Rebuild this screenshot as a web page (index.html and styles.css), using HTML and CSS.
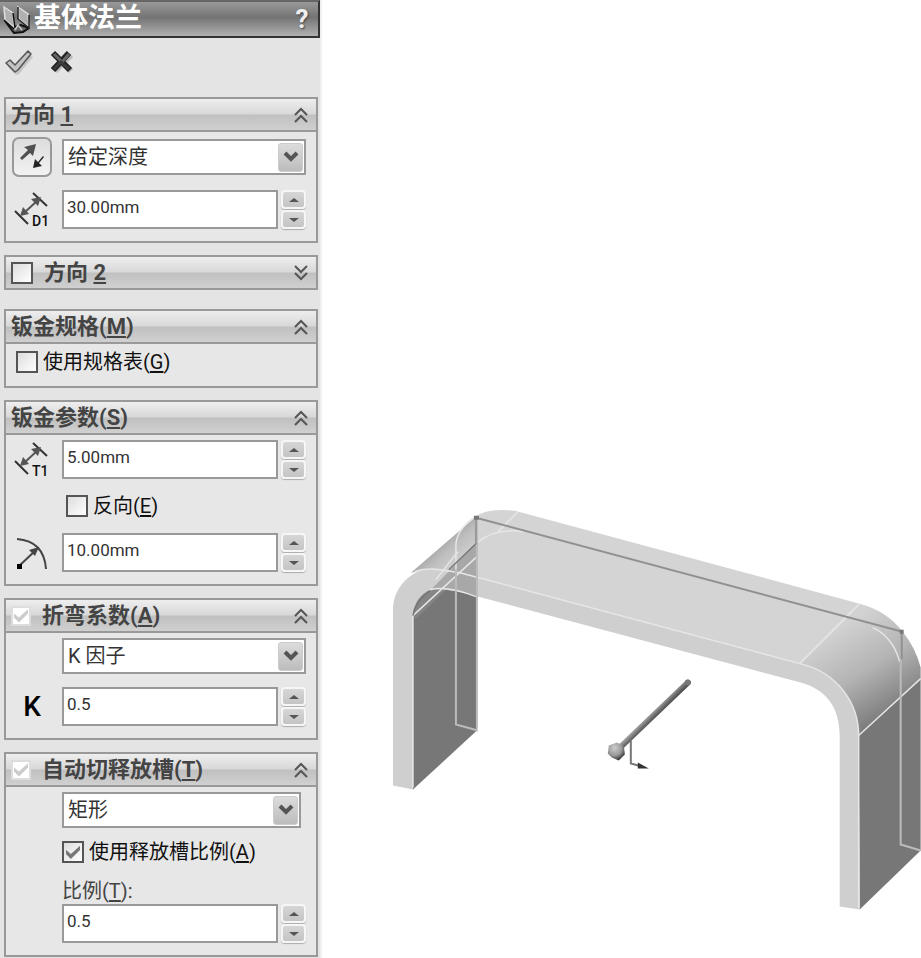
FILE: index.html
```html
<!DOCTYPE html>
<html lang="zh-CN">
<head>
    <meta charset="UTF-8">
    <meta name="viewport" content="width=device-width, initial-scale=1.0">
    <title>基体法兰</title>
    <link rel="stylesheet" href="styles.css">
</head>
<body>
    <form class="sidebar">
        <header class="titlebar">
            <svg width="30" height="32" viewBox="0 0 30 32">
                <path d="M5 18l9 6 7-2 8 3-6 4-9 1z" fill="#666" stroke="#111" stroke-width="2"/>
                <path d="M4 4l9 6 1 14-9-7z" fill="#b0b0b0" stroke="#ddd" stroke-width="1.5"/>
                <path d="M13 10l2 15M4 17l10 9" fill="none" stroke="#111" stroke-width="1.5"/>
                <path d="M18 4l10 7 1 13-10-8z" fill="#b0b0b0" stroke="#ddd" stroke-width="1.5"/>
                <path d="M18 4v12l11 9V12" fill="none" stroke="#222" stroke-width="1.5"/>
                <path d="M15 27l3-5 4 5" fill="none" stroke="#ccc" stroke-width="1.5"/>
            </svg>
            <h1>基体法兰</h1>
            <button type="button" class="help" aria-label="帮助">?</button>
        </header>

        <div class="toolbar">
            <button type="submit" class="tool" aria-label="确定">
                <svg width="30" height="26" viewBox="0 0 30 26">
                    <path d="M3 15l4-3 5 5L24 3l4 2-14 17-3 1z" fill="#999" opacity=".4" transform="translate(1 2)"/>
                    <path d="M2 13l4-3 5 5L24 1l3 3-13 16-3 2z" fill="#c4c4c4" stroke="#555" stroke-width="1.5" stroke-linejoin="round"/>
                </svg>
            </button>
            <button type="reset" class="tool" aria-label="取消">
                <svg width="26" height="26" viewBox="0 0 26 26">
                    <path d="M5 5l16 16M21 5L5 21" stroke="#bbb" stroke-width="6"/>
                    <path d="M3 3l17 17M19 3L3 20" stroke="#222" stroke-width="6"/>
                    <path d="M4 4l8 8 7-8" fill="none" stroke="#666" stroke-width="3"/>
                    <path d="M4 19l7-7 8 7" fill="none" stroke="#3c3c3c" stroke-width="3"/>
                </svg>
            </button>
        </div>

        <section class="panel">
            <div class="panel-head">
                <h2>方向 <u>1</u></h2>
                <button type="button" class="fold" aria-label="折叠方向 1"><svg width="14" height="16" viewBox="0 0 14 16"><path d="M1 8l6-6 6 6M1 15l6-6 6 6"/></svg></button>
            </div>
            <div class="panel-body">
                <div class="row">
                    <button type="button" class="flip" aria-label="反向">
                        <svg width="30" height="32" viewBox="0 0 30 32">
                            <path d="M3 17L11 9 7 6 19 3 16 15 13 12 5 19z" fill="#505050"/>
                            <path d="M27 16l-5 6 3 3-9 2 2-9 3 3 5-6z" fill="#222"/>
                        </svg>
                    </button>
                    <div class="combo">
                        <select aria-label="终止条件"><option>给定深度</option></select>
                        <span class="arrow"><svg width="16" height="12" viewBox="0 0 16 12"><path d="M2 2l6 6 6-6"/></svg></span>
                    </div>
                </div>
                <div class="row">
                    <svg class="dim" width="38" height="38" viewBox="0 0 38 38">
                        <path d="M21 2l14 13M3 20l13 13" stroke="#333" stroke-width="2"/>
                        <path d="M12 22L26 9" stroke="#555" stroke-width="2"/>
                        <path d="M8 25l3-9 6 7zM29 6l-10 2 7 7z" fill="#555"/>
                        <text x="20" y="35">D1</text>
                    </svg>
                    <div class="spin">
                        <input type="text" value="30.00mm" aria-label="深度">
                        <div class="spin-btns">
                            <button type="button" aria-label="增加深度"><svg width="10" height="4" viewBox="0 0 10 4"><path d="M0 4l5-4 5 4z"/></svg></button>
                            <button type="button" aria-label="减少深度"><svg width="10" height="4" viewBox="0 0 10 4"><path d="M0 0l5 4 5-4z"/></svg></button>
                        </div>
                    </div>
                </div>
            </div>
        </section>

        <section class="panel panel-closed">
            <div class="panel-head">
                <input type="checkbox" id="direction2" class="check">
                <h2><label for="direction2">方向 <u>2</u></label></h2>
                <button type="button" class="fold" aria-label="展开方向 2"><svg width="14" height="16" viewBox="0 0 14 16"><path d="M1 1l6 6 6-6M1 8l6 6 6-6"/></svg></button>
            </div>
        </section>

        <section class="panel">
            <div class="panel-head">
                <h2>钣金规格(<u>M</u>)</h2>
                <button type="button" class="fold" aria-label="折叠钣金规格"><svg width="14" height="16" viewBox="0 0 14 16"><path d="M1 8l6-6 6 6M1 15l6-6 6 6"/></svg></button>
            </div>
            <div class="panel-body panel-body-gauge">
                <label class="option"><input type="checkbox" class="check"><span>使用规格表(<u>G</u>)</span></label>
            </div>
        </section>

        <section class="panel">
            <div class="panel-head">
                <h2>钣金参数(<u>S</u>)</h2>
                <button type="button" class="fold" aria-label="折叠钣金参数"><svg width="14" height="16" viewBox="0 0 14 16"><path d="M1 8l6-6 6 6M1 15l6-6 6 6"/></svg></button>
            </div>
            <div class="panel-body panel-body-loose">
                <div class="row">
                    <svg class="dim" width="38" height="38" viewBox="0 0 38 38">
                        <path d="M21 2l14 13M3 20l13 13" stroke="#333" stroke-width="2"/>
                        <path d="M12 22L26 9" stroke="#555" stroke-width="2"/>
                        <path d="M8 25l3-9 6 7zM29 6l-10 2 7 7z" fill="#555"/>
                        <text x="20" y="35">T1</text>
                    </svg>
                    <div class="spin">
                        <input type="text" value="5.00mm" aria-label="厚度">
                        <div class="spin-btns">
                            <button type="button" aria-label="增加厚度"><svg width="10" height="4" viewBox="0 0 10 4"><path d="M0 4l5-4 5 4z"/></svg></button>
                            <button type="button" aria-label="减少厚度"><svg width="10" height="4" viewBox="0 0 10 4"><path d="M0 0l5 4 5-4z"/></svg></button>
                        </div>
                    </div>
                </div>
                <div class="row">
                    <label class="option option-reverse field"><input type="checkbox" class="check"><span>反向(<u>E</u>)</span></label>
                </div>
                <div class="row">
                    <svg class="dim" width="38" height="38" viewBox="0 0 38 38">
                        <path d="M5 5Q32 7 34 35" fill="none" stroke="#444" stroke-width="2"/>
                        <path d="M7 32L23 17" stroke="#444" stroke-width="2"/>
                        <path d="M27 13l-10 3 6 6z" fill="#444"/>
                        <path d="M5 30h5v5H5z" fill="#000"/>
                    </svg>
                    <div class="spin">
                        <input type="text" value="10.00mm" aria-label="折弯半径">
                        <div class="spin-btns">
                            <button type="button" aria-label="增加半径"><svg width="10" height="4" viewBox="0 0 10 4"><path d="M0 4l5-4 5 4z"/></svg></button>
                            <button type="button" aria-label="减少半径"><svg width="10" height="4" viewBox="0 0 10 4"><path d="M0 0l5 4 5-4z"/></svg></button>
                        </div>
                    </div>
                </div>
            </div>
        </section>

        <section class="panel">
            <div class="panel-head">
                <input type="checkbox" id="bend" class="check" checked disabled>
                <h2><label for="bend">折弯系数(<u>A</u>)</label></h2>
                <button type="button" class="fold" aria-label="折叠折弯系数"><svg width="14" height="16" viewBox="0 0 14 16"><path d="M1 8l6-6 6 6M1 15l6-6 6 6"/></svg></button>
            </div>
            <div class="panel-body">
                <div class="row">
                    <div class="combo field">
                        <select aria-label="折弯系数类型"><option>K 因子</option></select>
                        <span class="arrow"><svg width="16" height="12" viewBox="0 0 16 12"><path d="M2 2l6 6 6-6"/></svg></span>
                    </div>
                </div>
                <div class="row">
                    <label for="kfactor" class="k">K</label>
                    <div class="spin">
                        <input type="text" id="kfactor" value="0.5">
                        <div class="spin-btns">
                            <button type="button" aria-label="增加K因子"><svg width="10" height="4" viewBox="0 0 10 4"><path d="M0 4l5-4 5 4z"/></svg></button>
                            <button type="button" aria-label="减少K因子"><svg width="10" height="4" viewBox="0 0 10 4"><path d="M0 0l5 4 5-4z"/></svg></button>
                        </div>
                    </div>
                </div>
            </div>
        </section>

        <section class="panel">
            <div class="panel-head">
                <input type="checkbox" id="relief" class="check" checked disabled>
                <h2><label for="relief">自动切释放槽(<u>T</u>)</label></h2>
                <button type="button" class="fold" aria-label="折叠自动切释放槽"><svg width="14" height="16" viewBox="0 0 14 16"><path d="M1 8l6-6 6 6M1 15l6-6 6 6"/></svg></button>
            </div>
            <div class="panel-body">
                <div class="row">
                    <div class="combo combo-short field">
                        <select aria-label="释放槽类型"><option>矩形</option></select>
                        <span class="arrow"><svg width="16" height="12" viewBox="0 0 16 12"><path d="M2 2l6 6 6-6"/></svg></span>
                    </div>
                </div>
                <div class="row">
                    <label class="option field"><input type="checkbox" class="check" checked><span>使用释放槽比例(<u>A</u>)</span></label>
                </div>
                <div class="row">
                    <div class="field ratio">
                        <label for="ratio">比例(<u>T</u>):</label>
                        <div class="spin">
                            <input type="text" id="ratio" value="0.5">
                            <div class="spin-btns">
                                <button type="button" aria-label="增加比例"><svg width="10" height="4" viewBox="0 0 10 4"><path d="M0 4l5-4 5 4z"/></svg></button>
                                <button type="button" aria-label="减少比例"><svg width="10" height="4" viewBox="0 0 10 4"><path d="M0 0l5 4 5-4z"/></svg></button>
                            </div>
                        </div>
                    </div>
                </div>
            </div>
        </section>
    </form>

    <main class="viewport">
        <svg viewBox="322 0 599 958" role="img" aria-label="基体法兰预览">
            <defs>
                <linearGradient id="bendRight" gradientUnits="userSpaceOnUse" x1="835" y1="630" x2="888" y2="716">
                    <stop offset="0" stop-color="#d2d2d2"/>
                    <stop offset=".5" stop-color="#b4b4b4"/>
                    <stop offset="1" stop-color="#7c7c7c"/>
                </linearGradient>
                <linearGradient id="bendLeft" gradientUnits="userSpaceOnUse" x1="438" y1="546" x2="456" y2="566">
                    <stop offset="0" stop-color="#a8a8a8"/>
                    <stop offset=".4" stop-color="#bebebe"/>
                    <stop offset="1" stop-color="#cfcfcf"/>
                </linearGradient>
                <linearGradient id="rod" gradientUnits="userSpaceOnUse" x1="652" y1="712" x2="659" y2="719">
                    <stop offset="0" stop-color="#aaa"/>
                    <stop offset=".5" stop-color="#666"/>
                    <stop offset="1" stop-color="#333"/>
                </linearGradient>
                <radialGradient id="knob" cx=".4" cy=".3" r=".7">
                    <stop offset="0" stop-color="#ccc"/>
                    <stop offset=".6" stop-color="#999"/>
                    <stop offset="1" stop-color="#333"/>
                </radialGradient>
            </defs>

            <!-- left leg -->
            <path d="M413 617L434 588 477 580V731L413 790z" fill="#777"/>
            <!-- top face and left bend -->
            <path d="M413 572L476 517Q486 508 515 511L860 604 800 664 460 574Q447 570 433 569z" fill="#d4d4d4"/>
            <path d="M411 573L476 517 477 544 446 573 433 569z" fill="url(#bendLeft)"/>
            <!-- right leg and bend -->
            <path d="M859 736L921 680V851L860 910z" fill="#777"/>
            <path d="M800 664L860 604Q887 611 903 632 916 648 921 668V680L859 736Q852 677 800 664z" fill="url(#bendRight)"/>
            <!-- front profile -->
            <path d="M393 786V610C393 588 411 569 433 569Q447 569 460 573L800 664C836 672 859 702 859 736L860 910 840 907V737C840 707 826 690 801 683L475 596Q455 590 434 589C422 593 413 603 413 617V790z" fill="#cfcfcf"/>
            <!-- inside of the left bend seen through the top -->
            <path d="M431 590L477 543V597Q455 589 431 590z" fill="#a8a8a8"/>
            <path d="M413 617C413 603 422 593 431 590H446L416 619z" fill="#858585"/>

            <g fill="none" stroke="#e6e6e6" stroke-width="1.5">
                <path d="M415 572Q425 568 440 570L460 573 800 664C836 672 859 702 859 736V908"/>
                <path d="M413 788V616L477 557M430 590Q448 586 476 597M800 664L860 604M859 736L921 679"/>
                <path d="M456 570V545Q457 530 474 518M477 543Q496 528 523 532M436 580L458 552M498 532L518 512"/>
                <path d="M873 628Q893 637 900 662"/>
            </g>
            <path d="M456 570V725L478 731M477 520V729M901 636V845L921 851" fill="none" stroke="#bbb" stroke-width="2"/>
            <path d="M413 616Q415 602 430 591M449 570L477 543" fill="none" stroke="#777" stroke-width="1.5"/>
            <path d="M476 545V518" stroke="#999" stroke-width="2"/>
            <path d="M476 518L902 632V660" fill="none" stroke="#909090" stroke-width="2"/>
            <path d="M474 516h5v4h-5zM900 630h4v4h-4z" fill="#777"/>

            <!-- drag handle -->
            <path d="M620 748L688 683" stroke="url(#rod)" stroke-width="6" stroke-linecap="round"/>
            <circle cx="688" cy="683" r="3" fill="#777"/>
            <path d="M609 746l8-3 7 3 1 9-6 6-7-3-4-4z" fill="url(#knob)"/>
            <path d="M631 741V764L642 767" fill="none" stroke="#777" stroke-width="2"/>
            <path d="M638 763L649 769 638 769z" fill="#333"/>
        </svg>
    </main>
</body>
</html>
```
FILE: styles.css
```css
* {
    box-sizing: border-box;
}
body {
    margin: 0;
    display: flex;
    align-items: flex-start;
    min-height: 100vh;
    background-color: #fff;
    color: #333;
    font-family: Roboto, "Noto Sans CJK SC", sans-serif;
    font-size: 20px;
    line-height: 22px;
}
button, input, select {
    margin: 0;
    padding: 0;
    font: inherit;
    color: inherit;
}
button {
    border: none;
    background: none;
}
svg {
    display: block;
}
u {
    text-underline-offset: 2px;
}

/* property panel */
.sidebar {
    width: 35%;
    min-width: 320px;
    min-height: 100vh;
    background-color: #e4e4e4;
    border-right: 2px solid #f0f0f0;
}
.titlebar {
    display: flex;
    align-items: center;
    gap: 4px;
    height: 38px;
    padding-right: 10px;
    border: 2px solid #333;
    border-top-color: #666;
    border-left: none;
    background: linear-gradient(#999, #747474 45%, #b0b0b0);
}
.titlebar h1 {
    flex: 1;
    margin: 0;
    padding-bottom: 2px;
    color: #fff;
    font-size: 27px;
    line-height: 30px;
}
.help {
    color: #eee;
    font-size: 26px;
    font-weight: bold;
    line-height: 30px;
    text-shadow: 1px 1px 2px #444;
}
.toolbar {
    display: flex;
    gap: 16px;
    height: 59px;
    padding: 12px 4px;
}
.tool {
    height: 26px;
}

.panel {
    margin: 0 2px 12px 4px;
    border: 2px solid #999;
    background-color: #e7e7e7;
}
.panel-closed {
    margin-bottom: 19px;
}
.panel:last-child {
    margin-bottom: 0;
}
.panel-head {
    display: flex;
    align-items: center;
    gap: 11px;
    height: 31px;
    padding: 0 8px 0 5px;
    background: linear-gradient(#eee, #d8d8d8 48%, #c0c0c0 52%, #d0d0d0);
}
.panel-head h2 {
    flex: 1;
    margin: 0;
    color: #444;
    font-size: 22px;
    line-height: 28px;
}
.fold path, .arrow path {
    fill: none;
    stroke: #555;
    stroke-width: 2;
}
.panel-body {
    display: flex;
    flex-direction: column;
    gap: 13px;
    padding: 5px 10px 12px 6px;
    border-top: 2px solid #999;
}
.panel-body-gauge {
    padding: 7px 10px 13px;
}
.panel-body-loose {
    gap: 16px;
}
.row {
    display: grid;
    grid-template-columns: 40px minmax(0, 1fr);
    column-gap: 10px;
    align-items: center;
}
.field {
    grid-column: 2;
}
.dim text {
    font-size: 14px;
    font-weight: 500;
    fill: #111;
}
.k {
    color: #000;
    font-size: 28px;
    font-weight: 500;
    text-align: center;
}
.flip {
    display: flex;
    align-items: center;
    justify-content: center;
    height: 40px;
    border: 2px solid #999;
    border-radius: 7px;
    background: linear-gradient(#ddd, #f2f2f2);
}

/* drop-down with its own arrow */
.combo {
    display: grid;
    align-items: center;
}
.combo-short {
    margin-right: 5px;
}
.combo select, .arrow {
    grid-area: 1 / 1;
}
.combo select {
    appearance: none;
    width: 100%;
    height: 36px;
    padding: 0 34px 0 4px;
    border: 2px solid #999;
    border-radius: 0;
    background-color: #fff;
}
.arrow {
    display: flex;
    align-items: center;
    justify-content: center;
    justify-self: end;
    width: 25px;
    height: 29px;
    margin-right: 3px;
    border: 1px solid #ccc;
    border-radius: 3px;
    background: linear-gradient(#dcdcdc, #bcbcbc);
    pointer-events: none;
}
.arrow path {
    stroke-width: 4;
}

/* number field with up and down buttons */
.spin {
    display: flex;
    align-items: center;
    gap: 3px;
}
.spin input {
    flex: 1;
    width: 0;
    min-width: 0;
    height: 39px;
    padding: 0 3px 5px;
    border: 2px solid #999;
    background-color: #fff;
    font-size: 17px;
}
.spin-btns {
    display: flex;
    flex-direction: column;
    gap: 1px;
}
.spin-btns button {
    display: flex;
    align-items: center;
    justify-content: center;
    width: 25px;
    height: 19px;
    border: 2px solid #f6f6f6;
    border-radius: 4px;
    background: linear-gradient(#d6d6d6, #c4c4c4);
    box-shadow: 0 1px 1px #aaa;
}
.spin-btns path {
    fill: #555;
}

.option {
    display: flex;
    align-items: center;
    gap: 5px;
    color: #111;
}
.option-reverse {
    padding-left: 4px;
}
.check {
    appearance: none;
    flex: none;
    display: grid;
    place-items: center;
    width: 22px;
    height: 22px;
    border: 2px solid #555;
    background: linear-gradient(135deg, #ddd, #fff);
}
.check:checked::before {
    content: "";
    width: 14px;
    height: 14px;
    background-color: #777;
    clip-path: polygon(0 35%, 35% 65%, 100% 5%, 100% 35%, 35% 100%, 0 65%);
}
.check:disabled {
    width: 20px;
    height: 20px;
    border-color: #ddd;
    background: #fff;
}
.check:disabled::before {
    background-color: #ccc;
}
.ratio {
    padding-top: 4px;
}
.ratio label {
    display: block;
    margin-bottom: 2px;
    color: #444;
}

/* model view */
.viewport {
    flex: 1;
    min-width: 0;
}
.viewport svg {
    width: 100%;
}
```
